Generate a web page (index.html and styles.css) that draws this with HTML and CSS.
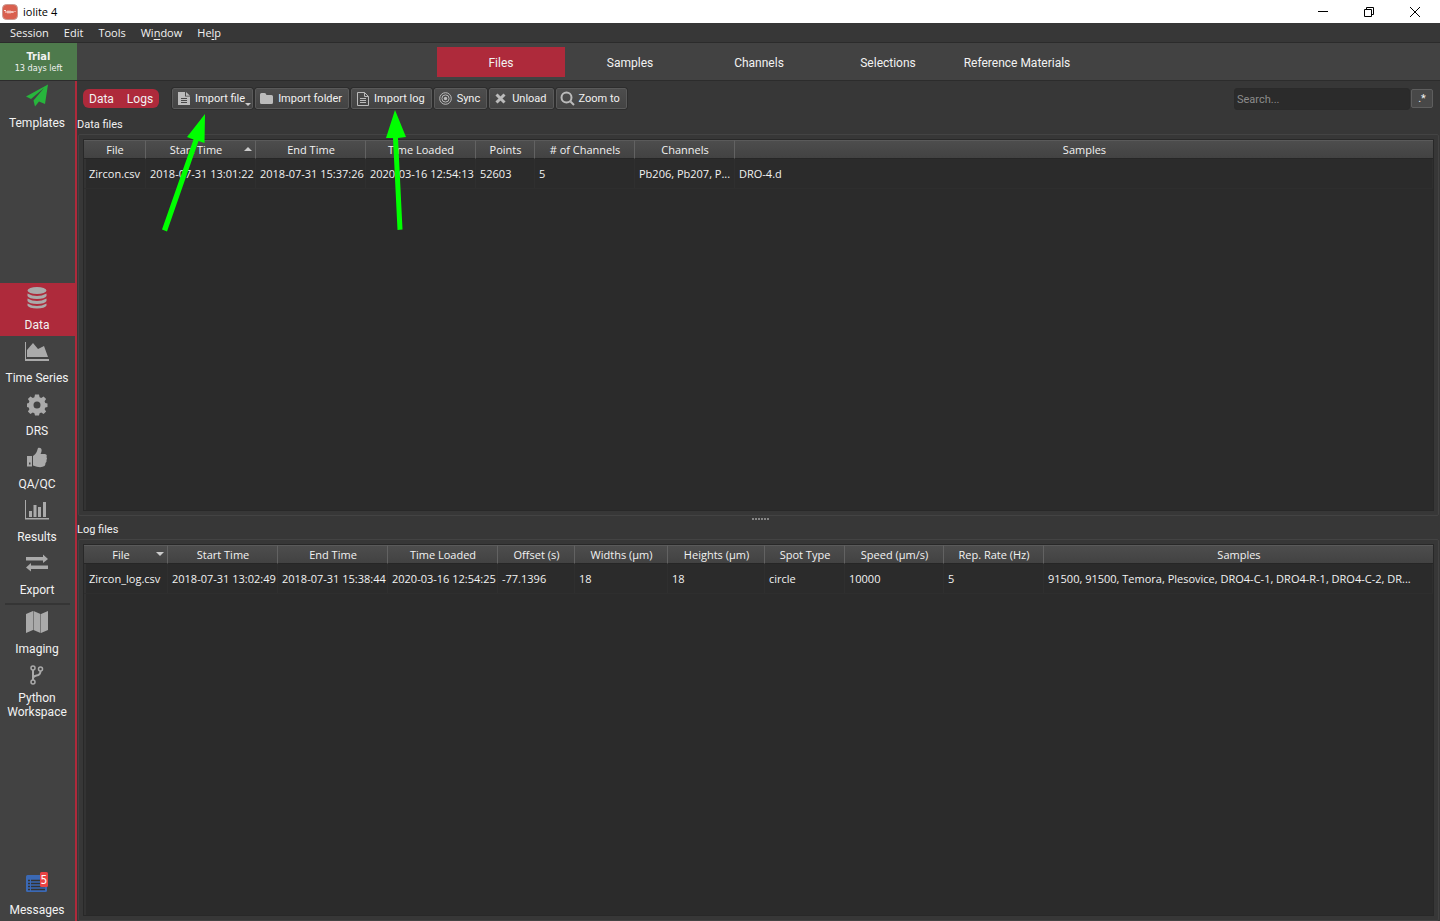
FILE: index.html
```html
<!DOCTYPE html>
<html lang="en">
<head>
<meta charset="utf-8">
<title>iolite 4</title>
<link rel="stylesheet" href="styles.css">
</head>
<body>
<div class="app">
  <header class="titlebar">
    <svg class="logo" width="16" height="16" viewBox="0 0 16 16"><rect x=".5" y=".5" width="15" height="15" rx="4" fill="#d9604f" stroke="#c99a92"/><path d="M2 7q1-2 2 0v2M5 8h7M6 6.5v3M8 6.5v3M10 7v2M13 7v1" stroke="#fbe3de" fill="none"/></svg>
    <span class="title">iolite 4</span>
    <div class="window-buttons">
      <button aria-label="Minimize"><svg width="12" height="12" viewBox="0 0 12 12"><path d="M1 5.500h10"/></svg></button>
      <button aria-label="Restore"><svg width="12" height="12" viewBox="0 0 12 12"><path d="M1.500 3.500h7v7h-7zM3.500 3.500v-2h7v7h-2"/></svg></button>
      <button aria-label="Close"><svg width="12" height="12" viewBox="0 0 12 12"><path d="M1 1l10 10M11 1L1 11"/></svg></button>
    </div>
  </header>
  <nav class="menubar">
    <button>Session</button><button>Edit</button><button>Tools</button><button>Wi<u>n</u>dow</button><button>He<u>l</u>p</button>
  </nav>
  <div class="topbar">
    <div class="trial"><strong>Trial</strong><span>13 days left</span></div>
    <nav class="tabs">
      <button class="tab active">Files</button>
      <button class="tab">Samples</button>
      <button class="tab">Channels</button>
      <button class="tab">Selections</button>
      <button class="tab">Reference Materials</button>
    </nav>
  </div>
  <div class="body">
    <aside class="sidebar">
      <button class="side"><svg width="24" height="24" viewBox="0 0 24 24"><path fill="#27b53c" d="M23 0.500L20 20 14 17.500 10 22.500 8.500 16.500 19 4 6 15 1 12.500z"/></svg><span>Templates</span></button>
      <div class="space"></div>
      <button class="side active"><svg width="24" height="24" viewBox="0 0 24 24"><ellipse cx="12" cy="4.500" rx="9.500" ry="3.500"/><path d="M2.500 7.500q9.500 5 19 0v2.500q-1.500 3-9.500 3t-9.500-3zM2.500 12.500q9.500 5 19 0v2.500q-1.500 3-9.500 3t-9.500-3zM2.500 17.500q9.500 5 19 0v2q-1.500 3-9.500 3t-9.500-3z"/></svg><span>Data</span></button>
      <button class="side"><svg width="24" height="24" viewBox="0 0 24 24"><path d="M0 3h1v17h23v2H0zM2 18v-7l6-7 5 6 6-3 4 11z"/></svg><span>Time Series</span></button>
      <button class="side"><svg width="24" height="24" viewBox="0 0 24 24"><path fill-rule="evenodd" d="M10 2.500h4l.6 2.700 1.600.7 2.400-1.500 2.500 2.500-1.500 2.400.7 1.600 2.200.6v3.500l-2.200.6-.7 1.600 1.500 2.400-2.500 2.500-2.400-1.500-1.600.7-.6 2.200h-4l-.6-2.200-1.600-.7-2.400 1.500-2.500-2.500 1.500-2.400-.7-1.600L2 15v-3.500l1.700-.6.7-1.600-1.500-2.400 2.500-2.500 2.400 1.500 1.600-.7zM12 9.500a3.500 3.500 0 100 7 3.500 3.500 0 000-7z"/></svg><span>DRS</span></button>
      <button class="side"><svg width="24" height="24" viewBox="0 0 24 24"><path fill-rule="evenodd" d="M2 11h5v10.500H2zM4 17.500v2h1.500v-2zM8 11c4-3 4-5 5-8 4-1 4.500 3 2.500 6H20q2.500.5 1.500 3 1 1.500 0 3 .5 2-1 3 0 2-1 3-4 2.500-11.500-.5z"/></svg><span>QA/QC</span></button>
      <button class="side"><svg width="24" height="24" viewBox="0 0 24 24"><path d="M0 2h1v18h23v1.500H0zM4 13h3v6H4zM8.500 7h3v12h-3zM13 9h3v10h-3zM18 4h3v15h-3z"/></svg><span>Results</span></button>
      <button class="side"><svg width="24" height="24" viewBox="0 0 24 24"><path d="M1 6h17V3.500l5 4.500-5 4V9.500H1zM23 14.500H6V12l-5 4.500 5 4V18h17z"/></svg><span>Export</span></button>
      <hr>
      <button class="side"><svg width="24" height="24" viewBox="0 0 24 24"><path d="M1 4l7-3v19l-7 3zM8.500 1l7 3v19l-7-3zM16 4l7-3v19l-7 3z"/></svg><span>Imaging</span></button>
      <button class="side tall"><svg width="24" height="24" viewBox="0 0 24 24"><g fill="none" stroke="#aaa" stroke-width="1.500"><circle cx="8" cy="5" r="2"/><circle cx="8" cy="19" r="2"/><circle cx="15.500" cy="6" r="2"/><path stroke-width="2" d="M8 7v10M15.500 8q0 4-4 4.500-3 .5-3.500 2.500"/></g></svg><span>Python<br>Workspace</span></button>
      <div class="space"></div>
      <button class="side"><svg width="24" height="24" viewBox="0 0 24 24"><rect x="1" y="4" width="21" height="17" rx="1.500" fill="#3b69b5"/><path stroke="#333" stroke-width="1.300" d="M3 9.500h2M6 9.500h14M3 12.500h2M6 12.500h14M3 15.500h2M6 15.500h14M3 18.500h2M6 18.500h14"/><rect x="15" y="1" width="8" height="15" rx="1.500" fill="#e94343"/><text class="count" x="19" y="13" text-anchor="middle">5</text></svg><span>Messages</span></button>
    </aside>
    <main class="main">
      <div class="toolbar">
        <div class="toggle"><button>Data</button><button>Logs</button></div>
        <div class="tools">
          <button class="tool has-menu"><svg width="16" height="16" viewBox="0 0 16 16"><path fill-rule="evenodd" d="M2 1h7v4.500h5V14H2zM10 1l4 3.700h-4zM5 7v1h6V7zM5 9v1h6V9zM5 11v1h6v-1z"/></svg>Import file</button>
          <button class="tool"><svg width="16" height="16" viewBox="0 0 16 16"><path d="M1 3.500q0-1.500 1.500-1.500h3q1.500 0 2 2h5q1.500 0 1.500 1.500v6q0 1.500-1.500 1.500h-10Q1 13 1 11.500z"/></svg>Import folder</button>
          <button class="tool"><svg width="16" height="16" viewBox="0 0 16 16"><path fill="none" stroke="#bbb" d="M2.500 1.500h7l4 4v9h-11zM9.500 1.500v4h4M5 7.500h6M5 9.500h6M5 11.500h6"/></svg>Import log</button>
          <button class="tool"><svg width="16" height="16" viewBox="0 0 16 16"><g fill="none" stroke="#bbb"><circle cx="7.500" cy="7.500" r="5.800"/><circle cx="7.500" cy="7.500" r="3.600"/></g><circle cx="7.500" cy="7.500" r="1.700"/></svg>Sync</button>
          <button class="tool"><svg width="16" height="16" viewBox="0 0 16 16"><path stroke="#bbb" stroke-width="3" d="M3.500 3.500l8 8M11.500 3.500l-8 8"/></svg>Unload</button>
          <button class="tool"><svg width="16" height="16" viewBox="0 0 16 16"><g fill="none" stroke="#bbb" stroke-width="2"><circle cx="6.500" cy="6.500" r="5"/><path d="M10.500 10.500l3.500 3.500"/></g></svg>Zoom to</button>
        </div>
        <input class="search" type="text" placeholder="Search..." aria-label="Search">
        <button class="regex">.*</button>
      </div>
      <section class="pane">
        <h2>Data files</h2>
        <div class="frame"><div class="list">
          <table>
            <colgroup><col class="w62"><col class="w110"><col class="w110"><col class="w110"><col class="w59"><col class="w100"><col class="w100"><col></colgroup>
            <thead><tr><th>File</th><th class="sort up">Start Time</th><th>End Time</th><th>Time Loaded</th><th>Points</th><th># of Channels</th><th>Channels</th><th>Samples</th></tr></thead>
            <tbody><tr><td>Zircon.csv</td><td>2018-07-31 13:01:22</td><td>2018-07-31 15:37:26</td><td>2020-03-16 12:54:13</td><td>52603</td><td>5</td><td>Pb206, Pb207, P...</td><td>DRO-4.d</td></tr></tbody>
          </table>
        </div></div>
      </section>
      <div class="splitter"><i></i><i></i><i></i><i></i><i></i><i></i></div>
      <section class="pane">
        <h2>Log files</h2>
        <div class="frame"><div class="list">
          <table>
            <colgroup><col class="w84"><col class="w110"><col class="w110"><col class="w110"><col class="w77"><col class="w93"><col class="w97"><col class="w80"><col class="w99"><col class="w100"><col></colgroup>
            <thead><tr><th class="sort down">File</th><th>Start Time</th><th>End Time</th><th>Time Loaded</th><th>Offset (s)</th><th>Widths (µm)</th><th>Heights (µm)</th><th>Spot Type</th><th>Speed (µm/s)</th><th>Rep. Rate (Hz)</th><th>Samples</th></tr></thead>
            <tbody><tr><td>Zircon_log.csv</td><td>2018-07-31 13:02:49</td><td>2018-07-31 15:38:44</td><td>2020-03-16 12:54:25</td><td>-77.1396</td><td>18</td><td>18</td><td>circle</td><td>10000</td><td>5</td><td>91500, 91500, Temora, Plesovice, DRO4-C-1, DRO4-R-1, DRO4-C-2, DR...</td></tr></tbody>
          </table>
        </div></div>
      </section>
    </main>
  </div>
  <svg class="arrows" width="260" height="130" viewBox="155 105 260 130" fill="#0f0"><path d="M205 114L187 137 193.500 139.500 162 229.500 167 231.500 198.500 141 204.500 143z"/><path d="M395 110L386 138 393 138 397.500 230 402.500 229.500 398 138 406 137z"/></svg>
</div>
</body>
</html>
```
FILE: styles.css
```css
* { box-sizing: border-box; }
body { margin: 0; background: #373737; color: #f2f2f2; font: 11px/16px "Open Sans", sans-serif; }
button { border: 0; padding: 0; margin: 0; background: none; color: inherit; font: inherit; }
svg { display: block; flex: none; }

.app { position: relative; display: flex; flex-direction: column; height: 100vh; min-height: 740px; }

.titlebar { display: flex; align-items: center; gap: 5px; height: 23px; padding: 0 2px; background: #fff; color: #000; }
.window-buttons { display: flex; margin-left: auto; }
.window-buttons button { display: grid; place-items: center; width: 46px; height: 20px; }
.window-buttons svg { fill: none; stroke: #000; }

.menubar { display: flex; gap: 15px; height: 20px; padding: 0 10px; border-bottom: 1px solid #2b2b2b; }
.menubar u { text-underline-offset: 2px; }

.topbar { display: flex; height: 38px; background: #424242; border-bottom: 1px solid #2c2c2c; }
.trial { display: flex; flex-direction: column; justify-content: center; align-items: center; width: 77px; background: #4e7a4c; font: 9px/11px "DejaVu Sans Condensed", sans-serif; }
.trial strong { font-size: 11px; line-height: 13px; }
.tabs { flex: 1; display: flex; justify-content: center; align-items: center; gap: 1px; }
.tab { width: 128px; height: 30px; padding: 2px 0 0 1px; font: 12px/16px Roboto, sans-serif; }
.tab.active { background: #ae2a3b; }

.body { flex: 1; display: flex; min-height: 0; }
.sidebar { display: flex; flex-direction: column; width: 77px; background: #424242; border-right: 2px solid #ae2a3b; }
.side { display: flex; flex-direction: column; align-items: center; gap: 7px; height: 53px; padding: 3px 1px 0 0; font: 12px/16px Roboto, sans-serif; }
.side svg { fill: #aaa; }
.side.active { background: #ae2a3b; }
.side.tall { height: 59px; gap: 4px; line-height: 14px; }
.count { fill: #fff; font: 12px "DejaVu Sans Condensed", sans-serif; }
.space { flex: 1; }
.sidebar hr { width: 65px; height: 2px; margin: 2px 5px; border: 0; background: #353535; }

.main { flex: 1; display: flex; flex-direction: column; min-width: 0; }
.toolbar { display: flex; align-items: center; height: 35px; padding: 0 7px 0 6px; font: 11px/16px Roboto, sans-serif; }
.toggle { display: flex; gap: 13px; height: 19px; padding: 1px 6px 0; border-radius: 6px; background: #ae2a3b; font: 12px/19px Roboto, sans-serif; }
.tools { display: flex; gap: 2px; margin: 0 auto 0 13px; }
.tool { position: relative; display: flex; align-items: center; gap: 3px; height: 21px; padding: 1px 6px 0 3px; border: 1px solid #5a5a5a; border-radius: 2px; outline: 1px solid #2d2d2d; background: linear-gradient(#4d4d4d, #434343); }
.tool.has-menu { padding-right: 7px; }
.tool svg { fill: #bbb; }
.has-menu::after { content: ""; position: absolute; right: 1px; bottom: 2px; border: 3px solid transparent; border-top-color: #ccc; border-bottom: 0; }
.search { width: 176px; height: 22px; padding: 1px 2px 0; border: 1px solid #2a2a2a; border-radius: 3px; background: #2b2b2b; color: #eee; font: inherit; }
.search::placeholder { color: #8c8c8c; opacity: 1; }
.regex { width: 22px; height: 19px; margin-left: 1px; border: 1px solid #5e5e5e; border-radius: 2px; background: #484848; }

.pane { flex: 1; display: flex; flex-direction: column; min-height: 0; }
h2 { margin: 0; height: 18px; padding-top: 1px; font: 11px/16px Roboto, sans-serif; }
.frame { flex: 1; display: flex; margin: 0 1px; padding: 4px; border: 1px solid #434343; border-radius: 2px; }
.list { flex: 1; min-width: 0; border: 1px solid #282828; background: #2b2b2b; box-shadow: inset 2px 0 #333; }
.splitter { display: flex; justify-content: center; align-items: center; gap: 1px; height: 4px; margin-top: 1px; padding-left: 4px; }
.splitter i { width: 2px; height: 2px; background: #858585; }

table { width: 100%; table-layout: fixed; border-collapse: separate; border-spacing: 0; }
th { position: relative; height: 19px; padding: 0 0 0 1px; font-weight: 400; background: linear-gradient(#4d4d4d, #424242); border-top: 1px solid #5a5a5a; border-right: 1px solid #626262; border-bottom: 1px solid #262626; }
th:last-child { border-right: 0; }
th.sort { padding-right: 10px; }
.sort::after { content: ""; position: absolute; right: 3px; top: 6px; border: 4px solid transparent; }
.up::after { border-bottom-color: #ccc; border-top: 0; }
.down::after { border-top-color: #ccc; border-bottom: 0; }
td { height: 30px; padding: 0 0 0 4px; white-space: nowrap; overflow: hidden; text-overflow: ellipsis; border-right: 1px solid #2f2f2f; border-bottom: 1px solid #2e2e2e; }
td:first-child { padding-left: 5px; }
.w59 { width: 59px; }
.w62 { width: 62px; }
.w77 { width: 77px; }
.w80 { width: 80px; }
.w84 { width: 84px; }
.w93 { width: 93px; }
.w97 { width: 97px; }
.w99 { width: 99px; }
.w100 { width: 100px; }
.w110 { width: 110px; }

.arrows { position: absolute; left: 155px; top: 105px; pointer-events: none; }
```
